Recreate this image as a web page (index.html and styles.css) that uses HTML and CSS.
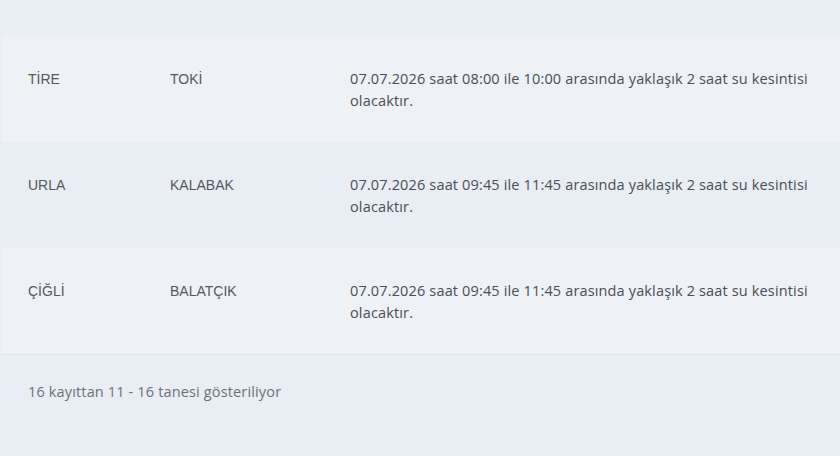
FILE: index.html
```html
<!DOCTYPE html>
<html lang="tr">
<head>
<meta charset="utf-8">
<link rel="stylesheet" href="styles.css">
</head>
<body>
<div class="page">
  <div class="table">
    <div class="row odd">
      <div class="cell plain">TİRE</div>
      <div class="cell plain">TOKİ</div>
      <div class="cell desc">07.07.2026 saat 08:00 ile 10:00 arasında yaklaşık 2 saat su kesintisi olacaktır.</div>
    </div>
    <div class="row">
      <div class="cell plain">URLA</div>
      <div class="cell plain">KALABAK</div>
      <div class="cell desc">07.07.2026 saat 09:45 ile 11:45 arasında yaklaşık 2 saat su kesintisi olacaktır.</div>
    </div>
    <div class="row odd">
      <div class="cell plain">ÇİĞLİ</div>
      <div class="cell plain">BALATÇIK</div>
      <div class="cell desc">07.07.2026 saat 09:45 ile 11:45 arasında yaklaşık 2 saat su kesintisi olacaktır.</div>
    </div>
  </div>
  <div class="info">16 kayıttan 11 - 16 tanesi gösteriliyor</div>
</div>
</body>
</html>
```
FILE: styles.css
```css
html, body {
  margin: 0;
  padding: 0;
  background: #e9edf4;
}
.page {
  padding-top: 36px;
  padding-left: 2px;
}
.table {
  border-bottom: 1px solid #dde1e8;
}
.row {
  display: grid;
  grid-template-columns: 142px 180px 475px;
  padding: 32px 0 30px 26px;
  height: 44px;
}
.row.odd {
  background: #eef1f6;
}
.cell {
  font-size: 14px;
  line-height: 22px;
}
.plain {
  font-family: "Liberation Sans", Arial, sans-serif;
  color: #55595f;
}
.desc {
  font-family: "Open Sans", sans-serif;
  font-size: 14.5px;
  letter-spacing: 0.15px;
  color: #4a4e55;
}
.info {
  font-family: "Open Sans", sans-serif;
  font-size: 14.5px;
  letter-spacing: 0.15px;
  line-height: 22px;
  color: #6d7179;
  padding: 26px 0 0 26px;
}
```
